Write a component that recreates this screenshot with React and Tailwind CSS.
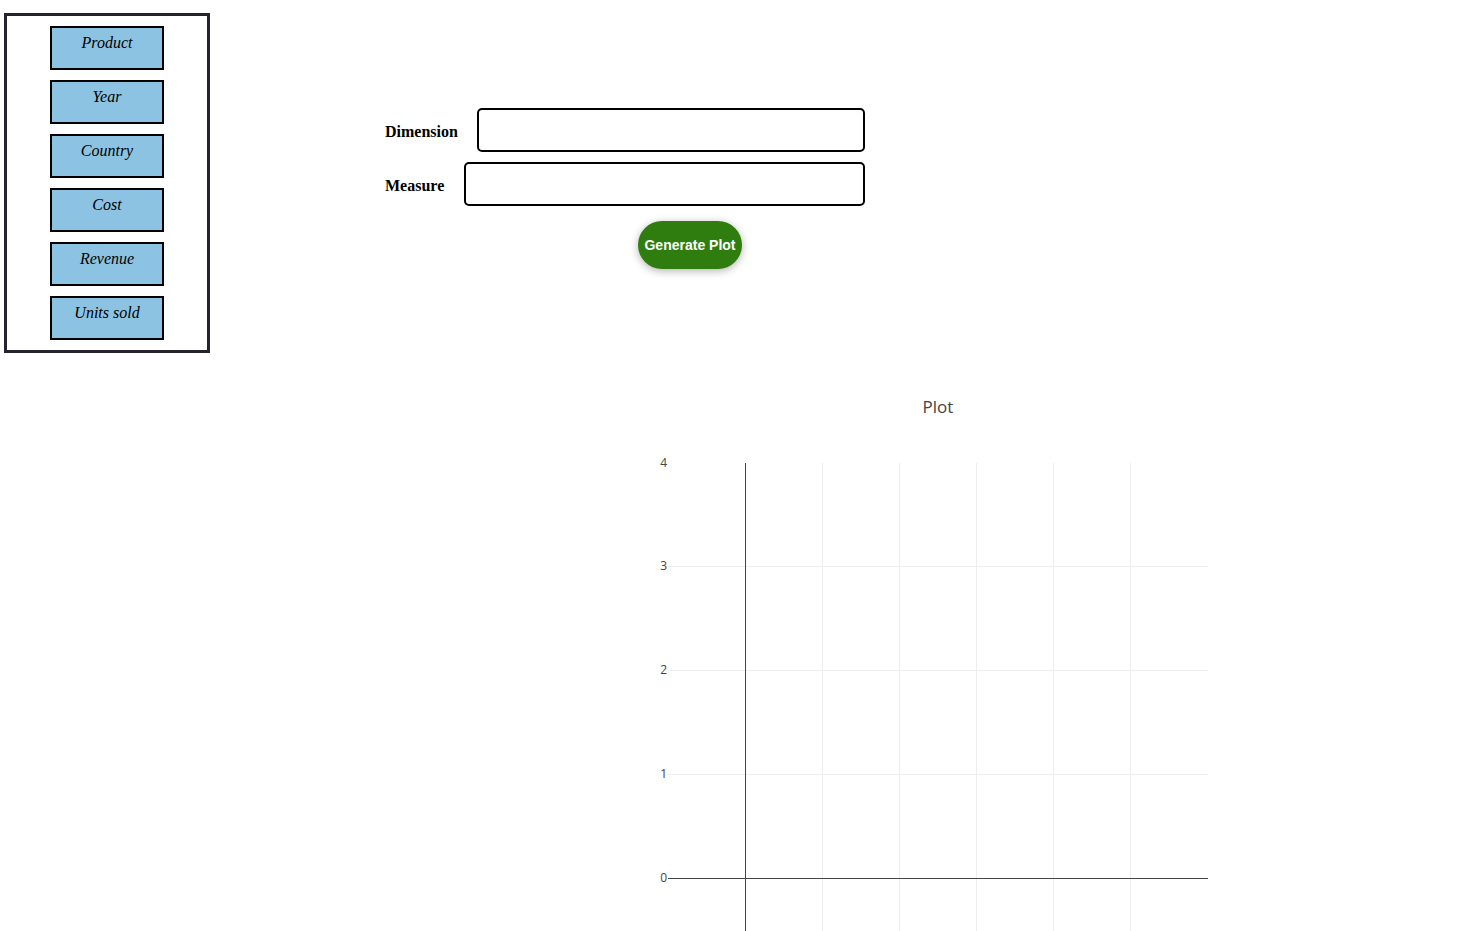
import React from "react";

const fields = ["Product", "Year", "Country", "Cost", "Revenue", "Units sold"];

function FieldList() {
  return (
    <div className="mt-[13px] ml-[4px] w-[206px] h-[340px] border-[3px] border-[#25232e] flex flex-col items-center gap-[10px] pt-[10px] shrink-0">
      {fields.map((f) => (
        <div
          key={f}
          className="w-[114px] h-[44px] border-2 border-black bg-[#8cc3e3] text-center italic text-[16px] leading-[18px] pt-[6px] text-black"
          style={{ fontFamily: '"Liberation Serif", serif' }}
        >
          {f}
        </div>
      ))}
    </div>
  );
}

function Form() {
  return (
    <div className="ml-[175px] mt-[108px] w-[480px]">
      <div className="flex items-center">
        <label
          className="font-bold text-[16px] text-black pt-[4px]"
          style={{ fontFamily: '"Liberation Serif", serif' }}
        >
          Dimension
        </label>
        <input className="ml-[19px] flex-1 h-[44px] border-2 border-black rounded-[5px]" />
      </div>
      <div className="flex items-center mt-[10px]">
        <label
          className="font-bold text-[16px] text-black pt-[4px]"
          style={{ fontFamily: '"Liberation Serif", serif' }}
        >
          Measure
        </label>
        <input className="ml-[20px] flex-1 h-[44px] border-2 border-black rounded-[5px]" />
      </div>
      <button
        className="mt-[15px] ml-[253px] w-[104px] h-[48px] rounded-full bg-[#2e7d0e] text-white font-bold text-[14px] shadow-[0_2px_8px_rgba(0,0,0,0.3)]"
        style={{ fontFamily: '"Liberation Sans", Arial, sans-serif' }}
      >
        Generate Plot
      </button>
    </div>
  );
}

function Plot() {
  const font = '"Open Sans", sans-serif';
  const yTicks = [
    { v: "4", y: 83 },
    { v: "3", y: 186 },
    { v: "2", y: 290 },
    { v: "1", y: 394 },
    { v: "0", y: 498 },
  ];
  const xGrid = [222, 299, 376, 453, 530];
  return (
    <div className="mt-[27px] ml-[600px]">
      <svg width="680" height="600" className="block">
        <text x="338" y="33" textAnchor="middle" fontFamily={font} fontSize="17" fill="#444">
          Plot
        </text>
        {xGrid.map((x) => (
          <line key={x} x1={x + 0.5} y1="83" x2={x + 0.5} y2="600" stroke="#eee" strokeWidth="1" />
        ))}
        {yTicks.slice(1, 4).map((t) => (
          <line key={t.v} x1="68" y1={t.y + 0.5} x2="608" y2={t.y + 0.5} stroke="#eee" strokeWidth="1" />
        ))}
        <line x1="68" y1="498.5" x2="608" y2="498.5" stroke="#444" strokeWidth="1" />
        <line x1="145.5" y1="83" x2="145.5" y2="600" stroke="#444" strokeWidth="1" />
        {yTicks.map((t) => (
          <text key={t.v} x="67" y={t.y + 4} textAnchor="end" fontFamily={font} fontSize="12" fill="#444">
            {t.v}
          </text>
        ))}
      </svg>
    </div>
  );
}

export default function App() {
  return (
    <div className="bg-white min-h-screen">
      <div className="flex items-start">
        <FieldList />
        <Form />
      </div>
      <Plot />
    </div>
  );
}
